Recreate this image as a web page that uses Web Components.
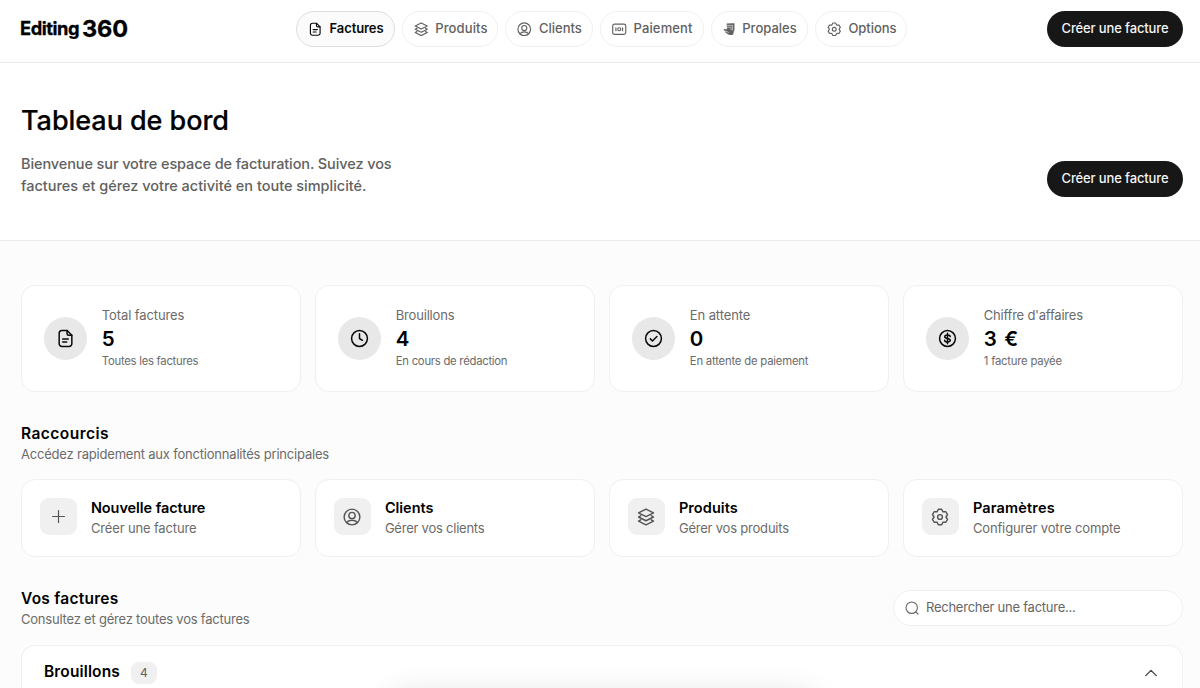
<!DOCTYPE html>
<html lang="fr">
<head>
<meta charset="utf-8">
<title>Editing 360</title>
<style>
  html, body { margin: 0; height: 688px; overflow: hidden; }
  body {
    background: #fcfcfc;
    color: #0a0a0a;
    font-family: Inter, "Liberation Sans", sans-serif;
    --muted: #6b6b6b;
    --line: #f0f0f0;
  }
</style>
</head>
<body>
<dashboard-page></dashboard-page>

<script>
const ICONS = {
  file: '<path d="M14 2H7.500A3.500 3.500 0 0 0 4 5.500v13A3.500 3.500 0 0 0 7.500 22h9a3.500 3.500 0 0 0 3.500-3.500V8z"/><path d="M14 2v4a2 2 0 0 0 2 2h4M8.500 12.500h7M8.500 16.500h5"/>',
  stack: '<path d="M12 1.500 22 6.500l-10 5-10-5z"/><path d="M5 10.200 2 12l10 5 10-5-3-1.800"/><path d="M5 15.700 2 17.500l10 5 10-5-3-1.800"/>',
  user: '<circle cx="12" cy="12" r="10.500"/><circle cx="12" cy="10" r="4.200"/><path d="M5 19.500c1.500-2.400 4-3.200 7-3.200s5.500.8 7 3.200"/>',
  cash: '<rect x="1.200" y="3.500" width="21.600" height="17" rx="3"/><circle cx="12" cy="12" r="2.500"/><path d="M6.500 9.500v5M17.500 9.500v5"/>',
  papers: '<path fill="currentColor" stroke-width="1" d="M8 1.500 21.500 1v12L19 21.500 17.500 23l-5.500-.5-6.500-4-.5-2.500-3-2v-2l6 .5z"/><path stroke="#fff" stroke-width="1.100" d="M9 4.500h9.500v9M9 8h6.500v5M4.500 15.500l6 2.500"/>',
  gear: '<path d="M9.800 1.700h4.400L16 5.100l3.800-.1 2.200 3.900L20 12l2 3.100-2.200 3.900-3.800-.1-1.800 3.400H9.800L8 18.900l-3.800.1L2 15.100 4 12 2 8.900 4.200 5l3.800.1z"/><circle cx="12" cy="12" r="3.200"/>',
  clock: '<circle cx="12" cy="12" r="10"/><path d="M12 6v6l3.700 2.300"/>',
  check: '<circle cx="12" cy="12" r="10"/><path d="m8 12.500 2.700 2.700 5.600-5.700"/>',
  dollar: '<circle cx="12" cy="12" r="10"/><path d="M15.500 9.500C15.300 8.200 14 7.500 12 7.500s-3.500.8-3.500 2.200c0 3.300 7 1.300 7 4.600 0 1.400-1.500 2.200-3.500 2.200s-3.400-.8-3.600-2.200M12 5.500v13"/>',
  plus: '<path d="M12 2.500v19M2.500 12h19"/>',
  search: '<circle cx="11.500" cy="11.500" r="9.800"/><path d="m18.500 18.500 3.800 3.800"/>',
  chevron: '<path d="m3 16.500 9-9 9 9"/>'
};

class UiIcon extends HTMLElement {
  connectedCallback() {
    const size = this.getAttribute('size') || 16;
    const weight = this.getAttribute('weight') || 1.9;
    this.attachShadow({ mode: 'open' }).innerHTML = `
      <style>
        :host { display: block; flex: none; width: ${size}px; height: ${size}px; }
        svg { display: block; }
      </style>
      <svg width="${size}" height="${size}" viewBox="0 0 24 24" fill="none" stroke="currentColor"
        stroke-width="${weight}" stroke-linecap="round" stroke-linejoin="round">${ICONS[this.getAttribute('name')]}</svg>
    `;
  }
}

// One line of text, tracked in or out so that it fills the given width
class UiText extends HTMLElement {
  connectedCallback() {
    this.attachShadow({ mode: 'open' }).innerHTML = `
      <style>
        :host { display: block; white-space: nowrap; }
        span { display: inline-block; }
      </style>
      <span><slot></slot></span>
    `;
    const width = parseFloat(this.getAttribute('width'));
    const span = this.shadowRoot.querySelector('span');
    const natural = span.getBoundingClientRect().width;
    if (width && natural) {
      span.style.letterSpacing = (width - natural) / this.textContent.length + 'px';
    }
  }
}

class NavPill extends HTMLElement {
  connectedCallback() {
    const icon = this.getAttribute('icon');
    this.attachShadow({ mode: 'open' }).innerHTML = `
      <style>
        :host {
          display: flex;
          align-items: center;
          gap: 7px;
          box-sizing: border-box;
          height: 36px;
          padding-left: 11px;
          border: 1px solid var(--line);
          border-radius: 18px;
          color: #616161;
          font-size: 13px;
          font-weight: 500;
          line-height: 18px;
        }
        :host([active]) {
          background: #fbfbfb;
          border-color: #dedede;
          color: #0a0a0a;
          font-weight: 600;
        }
        ui-text { margin-bottom: 2px; }
      </style>
      <ui-icon name="${icon}" size="${icon === 'papers' ? 12.5 : 14.5}"></ui-icon>
      <ui-text width="${this.getAttribute('text-width')}">${this.getAttribute('label')}</ui-text>
    `;
  }
}

class PrimaryButton extends HTMLElement {
  connectedCallback() {
    this.attachShadow({ mode: 'open' }).innerHTML = `
      <style>
        :host {
          display: flex;
          align-items: center;
          justify-content: center;
          box-sizing: border-box;
          width: 136px;
          height: 36px;
          padding-bottom: 2px;
          border-radius: 18px;
          background: #171717;
          color: #f5f5f5;
          font-size: 13px;
          font-weight: 500;
          line-height: 18px;
        }
      </style>
      <ui-text width="107">Créer une facture</ui-text>
    `;
  }
}

class AppHeader extends HTMLElement {
  connectedCallback() {
    this.attachShadow({ mode: 'open' }).innerHTML = `
      <style>
        :host {
          display: grid;
          grid-template-columns: 275px 1fr auto;
          box-sizing: border-box;
          height: 63px;
          padding: 11px 17px 0 20px;
          border-bottom: 1px solid #ebebeb;
          background: #fff;
        }
        .logo {
          display: flex;
          align-items: center;
          gap: 3px;
          height: 36px;
          color: #000;
          font-weight: 700;
          line-height: 34px;
        }
        .logo .name { margin-bottom: 3px; font-size: 18.300px; -webkit-text-stroke: 0.300px #000; }
        .logo .number { margin-bottom: 1px; font-size: 23.500px; -webkit-text-stroke: 0.300px #000; }
        nav {
          display: grid;
          grid-template-columns: 98.500px 96.500px 87.500px 103.500px 97px 92.500px;
          gap: 7.200px;
          padding-left: 1px;
        }
      </style>
      <div class="logo">
        <ui-text class="name" width="59">Editing</ui-text>
        <ui-text class="number" width="46">360</ui-text>
      </div>
      <nav>
        <nav-pill active icon="file" label="Factures" text-width="54"></nav-pill>
        <nav-pill icon="stack" label="Produits" text-width="52.5"></nav-pill>
        <nav-pill icon="user" label="Clients" text-width="43"></nav-pill>
        <nav-pill icon="cash" label="Paiement" text-width="59"></nav-pill>
        <nav-pill icon="papers" label="Propales" text-width="54.5"></nav-pill>
        <nav-pill icon="gear" label="Options" text-width="48"></nav-pill>
      </nav>
      <primary-button></primary-button>
    `;
  }
}

class PageHero extends HTMLElement {
  connectedCallback() {
    this.attachShadow({ mode: 'open' }).innerHTML = `
      <style>
        :host {
          display: flex;
          align-items: flex-end;
          justify-content: space-between;
          box-sizing: border-box;
          height: 178px;
          padding: 0 17px 43px 21px;
          border-bottom: 1px solid #ebebeb;
          background: #fff;
        }
        h1 { margin: 0 0 14px; color: #000; font-size: 27px; font-weight: 500; line-height: 36px; -webkit-text-stroke: 0.200px #000; }
        .intro { color: #616161; font-size: 14.500px; font-weight: 500; line-height: 22px; }
      </style>
      <div>
        <h1><ui-text width="208">Tableau de bord</ui-text></h1>
        <div class="intro">
          <ui-text width="370.5">Bienvenue sur votre espace de facturation. Suivez vos</ui-text>
          <ui-text width="345.5">factures et gérez votre activité en toute simplicité.</ui-text>
        </div>
      </div>
      <primary-button></primary-button>
    `;
  }
}

class StatCard extends HTMLElement {
  connectedCallback() {
    const [labelWidth, valueWidth, noteWidth] = this.getAttribute('widths').split(' ');
    this.attachShadow({ mode: 'open' }).innerHTML = `
      <style>
        :host {
          display: flex;
          align-items: center;
          gap: 14.800px;
          box-sizing: border-box;
          height: 107px;
          padding-left: 21.500px;
          border: 1px solid var(--line);
          border-radius: 14px;
          background: #fff;
        }
        .icon {
          display: grid;
          place-items: center;
          width: 43.500px;
          height: 43.500px;
          border-radius: 50%;
          background: #e8e8e8;
        }
        .text { color: var(--muted); margin-bottom: 3px; }
        .label { font-size: 13px; line-height: 20px; }
        .value { color: #000; font-size: 20.500px; font-weight: 600; line-height: 27px; }
        .note { font-size: 11.300px; line-height: 18px; }
      </style>
      <div class="icon"><ui-icon name="${this.getAttribute('icon')}" size="19"></ui-icon></div>
      <div class="text">
        <ui-text class="label" width="${labelWidth}">${this.getAttribute('label')}</ui-text>
        <ui-text class="value" width="${valueWidth}">${this.getAttribute('value')}</ui-text>
        <ui-text class="note" width="${noteWidth}">${this.getAttribute('note')}</ui-text>
      </div>
    `;
  }
}

class ShortcutCard extends HTMLElement {
  connectedCallback() {
    const [titleWidth, noteWidth] = this.getAttribute('widths').split(' ');
    this.attachShadow({ mode: 'open' }).innerHTML = `
      <style>
        :host {
          display: flex;
          align-items: center;
          gap: 14.400px;
          box-sizing: border-box;
          height: 78px;
          padding: 0 0 3px 18px;
          border: 1px solid var(--line);
          border-radius: 14px;
          background: #fff;
        }
        .icon {
          display: grid;
          place-items: center;
          width: 36.500px;
          height: 36.500px;
          border-radius: 9px;
          background: #f0f0f0;
          color: #555;
        }
        .text { margin-top: 3px; }
        .title { color: #000; font-size: 14.500px; font-weight: 600; line-height: 20px; }
        .note { color: var(--muted); font-size: 13px; line-height: 20px; }
      </style>
      <div class="icon"><ui-icon name="${this.getAttribute('icon')}" size="${this.getAttribute('icon-size') || 18}"></ui-icon></div>
      <div class="text">
        <ui-text class="title" width="${titleWidth}">${this.getAttribute('label')}</ui-text>
        <ui-text class="note" width="${noteWidth}">${this.getAttribute('note')}</ui-text>
      </div>
    `;
  }
}

class SectionHeading extends HTMLElement {
  connectedCallback() {
    const [titleWidth, noteWidth] = this.getAttribute('widths').split(' ');
    this.attachShadow({ mode: 'open' }).innerHTML = `
      <style>
        :host { display: block; }
        h2 { margin: 0; color: #000; font-size: 15.500px; font-weight: 600; line-height: 23px; }
        .note { margin-top: -1px; color: var(--muted); font-size: 13px; line-height: 20px; }
      </style>
      <h2><ui-text width="${titleWidth}">${this.getAttribute('label')}</ui-text></h2>
      <ui-text class="note" width="${noteWidth}">${this.getAttribute('note')}</ui-text>
    `;
  }
}

class SearchField extends HTMLElement {
  connectedCallback() {
    this.attachShadow({ mode: 'open' }).innerHTML = `
      <style>
        :host {
          display: flex;
          align-items: center;
          gap: 7.500px;
          box-sizing: border-box;
          width: 290px;
          height: 36px;
          padding-left: 11px;
          border: 1px solid var(--line);
          border-radius: 18px;
          background: #fff;
          color: #666;
          font-size: 13px;
          line-height: 18px;
        }
        ui-text { margin-bottom: 3px; }
      </style>
      <ui-icon name="search" size="14"></ui-icon>
      <ui-text width="149.5">Rechercher une facture...</ui-text>
    `;
  }
}

class InvoiceGroup extends HTMLElement {
  connectedCallback() {
    this.attachShadow({ mode: 'open' }).innerHTML = `
      <style>
        :host {
          display: flex;
          align-items: center;
          box-sizing: border-box;
          height: 56px;
          padding: 0 24px 0 22px;
          border: 1px solid var(--line);
          border-bottom: 0;
          border-radius: 14px 14px 0 0;
          background: #fff;
        }
        h3 { margin: 0 11px 3px 0; color: #000; font-size: 15.500px; font-weight: 600; line-height: 22px; }
        .count {
          width: 26px;
          height: 22px;
          margin: 0 auto 2px 0;
          border-radius: 8px;
          background: #f0f0f0;
          color: #616161;
          font-size: 12px;
          line-height: 21px;
          text-align: center;
        }
        ui-icon { margin-bottom: 2px; color: #444; }
      </style>
      <h3><ui-text width="76">Brouillons</ui-text></h3>
      <div class="count">4</div>
      <ui-icon name="chevron" size="14" weight="2.4"></ui-icon>
    `;
  }
}

class DashboardPage extends HTMLElement {
  connectedCallback() {
    this.attachShadow({ mode: 'open' }).innerHTML = `
      <style>
        :host { display: block; height: 688px; overflow: hidden; }
        main { padding: 44px 17.500px 0 21px; }
        .row { display: grid; grid-template-columns: repeat(4, 1fr); gap: 14.500px; }
        .shortcuts { margin: 30px 0 15px; }
        .invoices { display: flex; align-items: flex-start; justify-content: space-between; margin: 30px 0 11px; }
        .invoices search-field { margin: 3px 0 8px; }
        /* the bar waits below the fold, only its shadow shows */
        .dock {
          position: fixed;
          top: 694px;
          left: 385px;
          width: 435px;
          height: 50px;
          border-radius: 25px;
          box-shadow: 0 0 32px rgba(0, 0, 0, 0.120);
        }
      </style>
      <app-header></app-header>
      <page-hero></page-hero>
      <main>
        <div class="row">
          <stat-card icon="file" label="Total factures" value="5" note="Toutes les factures" widths="82.5 13.5 96.5"></stat-card>
          <stat-card icon="clock" label="Brouillons" value="4" note="En cours de rédaction" widths="58.5 14 111.5"></stat-card>
          <stat-card icon="check" label="En attente" value="0" note="En attente de paiement" widths="60.5 14 118.5"></stat-card>
          <stat-card icon="dollar" label="Chiffre d'affaires" value="3 €" note="1 facture payée" widths="99 35.5 78"></stat-card>
        </div>
        <section-heading class="shortcuts" label="Raccourcis" note="Accédez rapidement aux fonctionnalités principales" widths="88 308"></section-heading>
        <div class="row">
          <shortcut-card icon="plus" icon-size="15" label="Nouvelle facture" note="Créer une facture" widths="114.5 105.5"></shortcut-card>
          <shortcut-card icon="user" label="Clients" note="Gérer vos clients" widths="48.5 99.5"></shortcut-card>
          <shortcut-card icon="stack" label="Produits" note="Gérer vos produits" widths="59 110"></shortcut-card>
          <shortcut-card icon="gear" label="Paramètres" note="Configurer votre compte" widths="82 147.5"></shortcut-card>
        </div>
        <div class="invoices">
          <section-heading label="Vos factures" note="Consultez et gérez toutes vos factures" widths="97.5 228.5"></section-heading>
          <search-field></search-field>
        </div>
        <invoice-group></invoice-group>
      </main>
      <div class="dock"></div>
    `;
  }
}

customElements.define('ui-icon', UiIcon);
customElements.define('ui-text', UiText);
customElements.define('nav-pill', NavPill);
customElements.define('primary-button', PrimaryButton);
customElements.define('app-header', AppHeader);
customElements.define('page-hero', PageHero);
customElements.define('stat-card', StatCard);
customElements.define('shortcut-card', ShortcutCard);
customElements.define('section-heading', SectionHeading);
customElements.define('search-field', SearchField);
customElements.define('invoice-group', InvoiceGroup);
customElements.define('dashboard-page', DashboardPage);
</script>
</body>
</html>
